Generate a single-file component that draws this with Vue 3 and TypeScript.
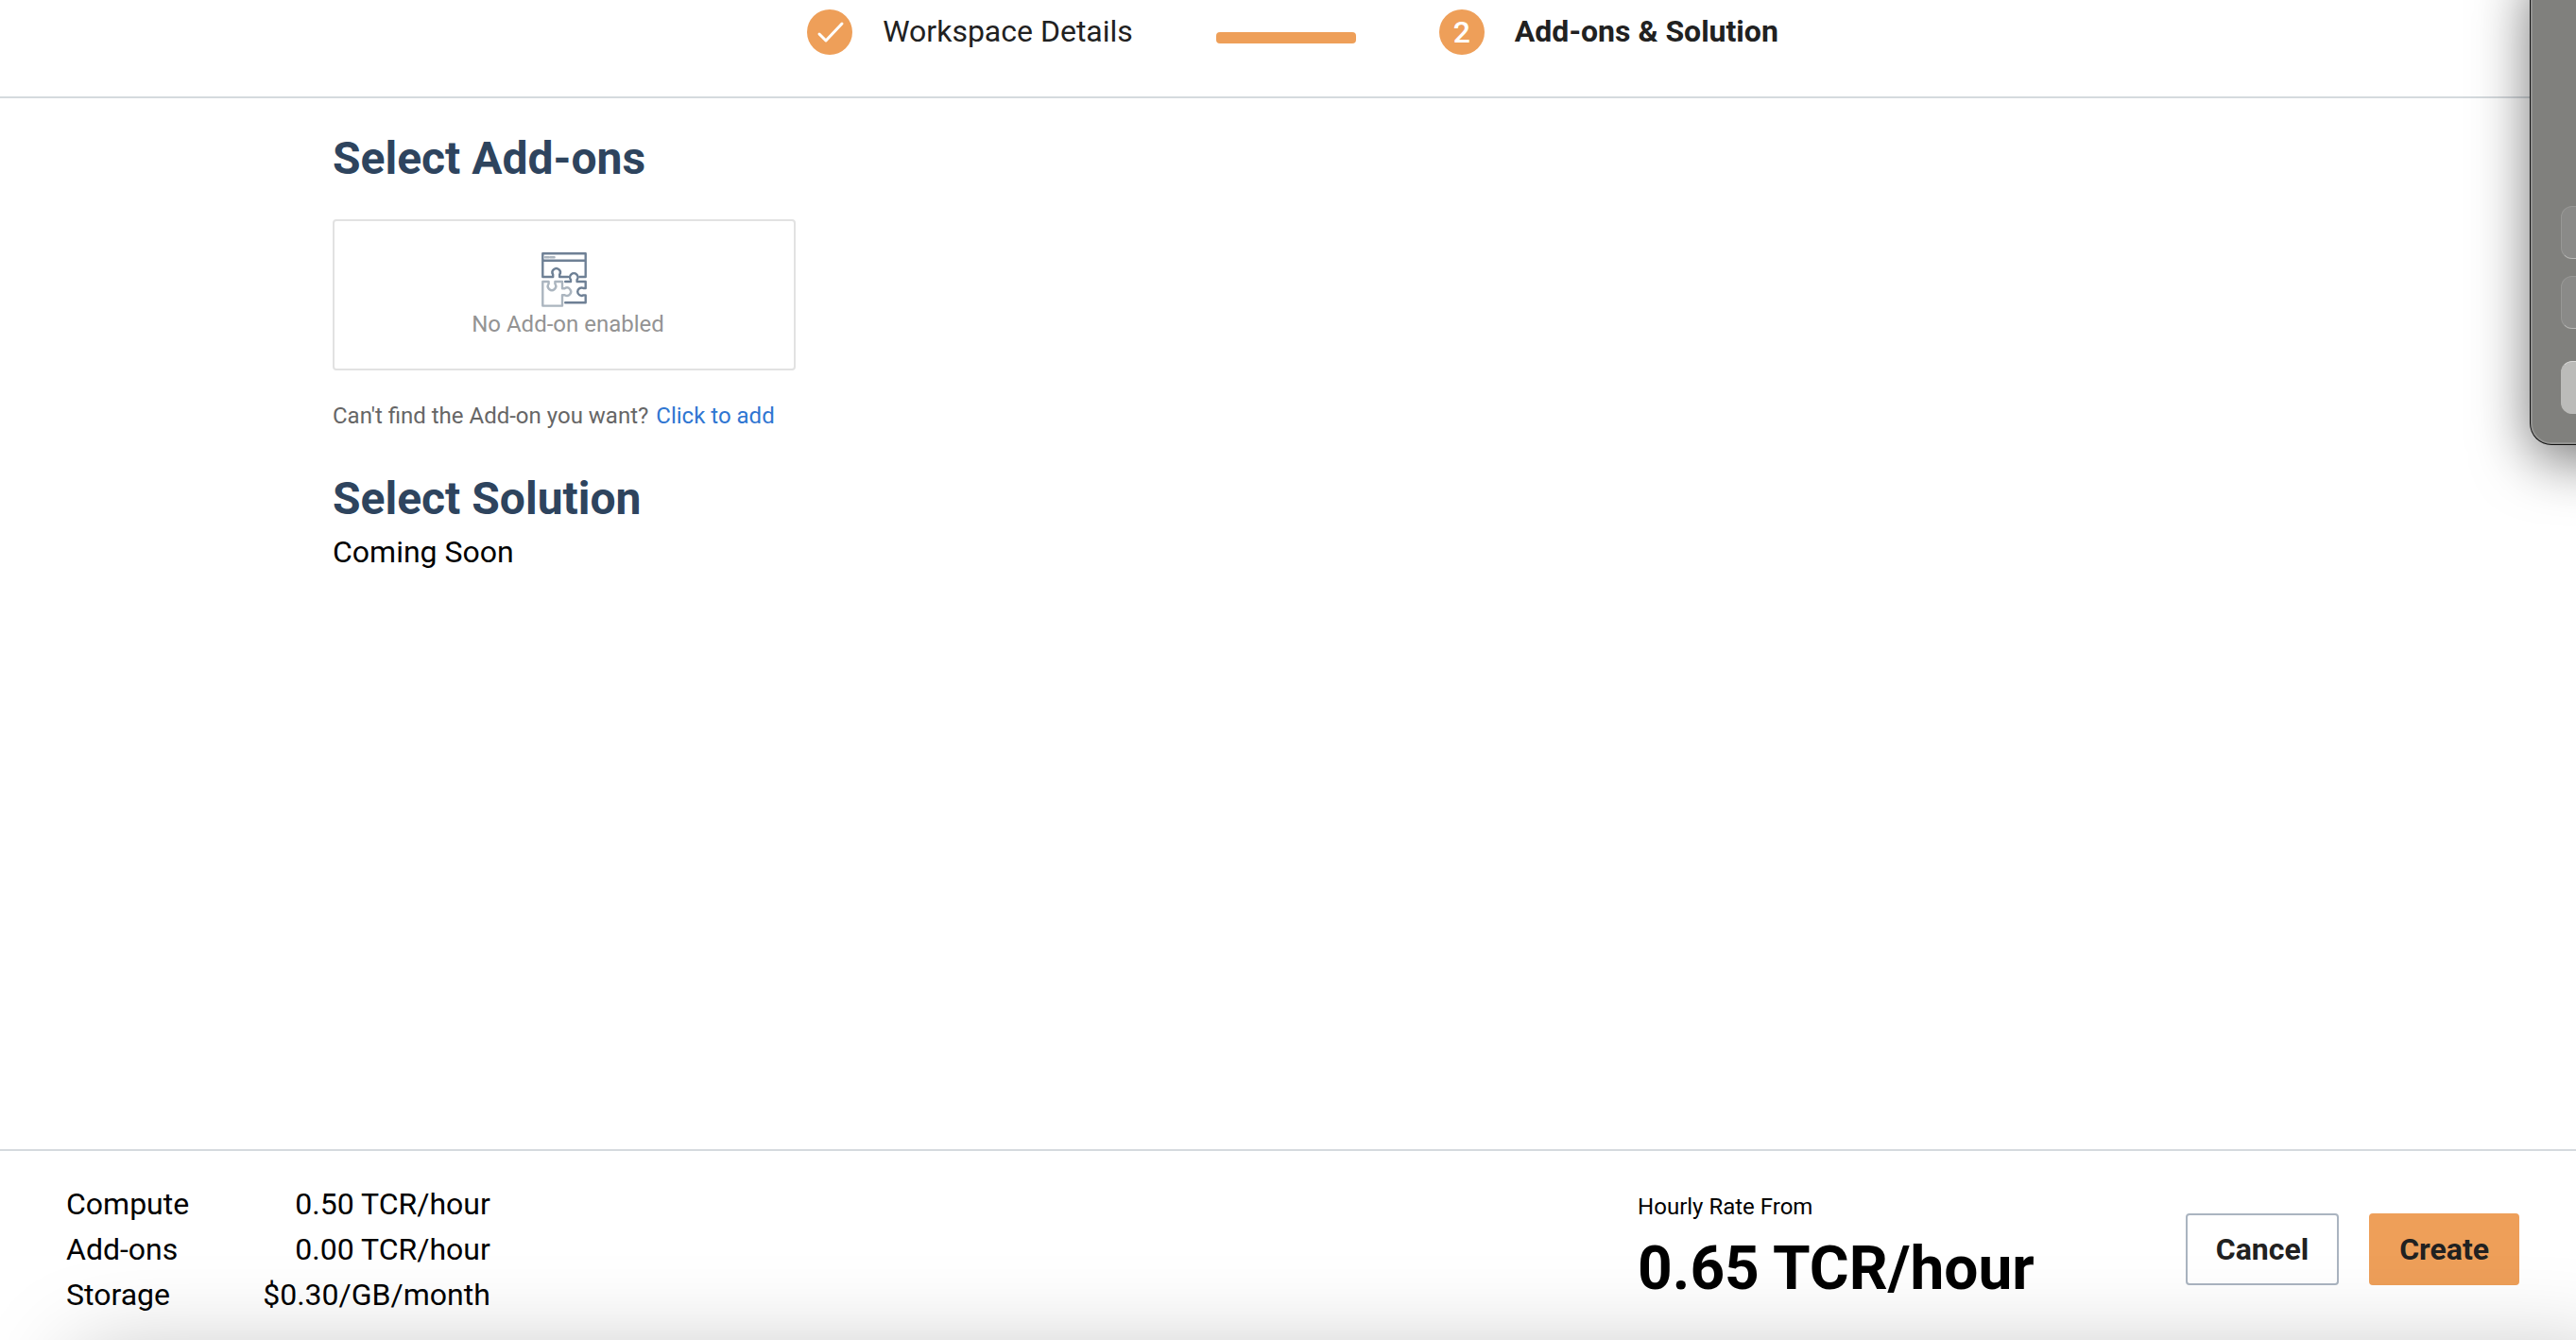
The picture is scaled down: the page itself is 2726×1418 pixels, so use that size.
<script setup lang="ts">
interface RateLine {
  label: string
  amount: string
}

const rates: RateLine[] = [
  { label: 'Compute', amount: '0.50 TCR/hour' },
  { label: 'Add-ons', amount: '0.00 TCR/hour' },
  { label: 'Storage', amount: '$0.30/GB/month' },
]
</script>

<template>
  <div class="page">
    <header class="stepper">
      <div class="step">
        <span class="badge">
          <svg class="check" viewBox="0 0 48 48" aria-hidden="true">
            <path d="M13 26 L20 33 L37 15" />
          </svg>
        </span>
        <span class="step-label">Workspace Details</span>
      </div>
      <span class="connector"></span>
      <div class="step current" aria-current="step">
        <span class="badge">2</span>
        <span class="step-label">Add-ons &amp; Solution</span>
      </div>
    </header>

    <main class="content">
      <h2 class="title">Select Add-ons</h2>
      <div class="empty-card">
        <svg class="puzzle" viewBox="0 0 48 60" aria-hidden="true">
          <g class="dark">
            <path d="M1.3 8.7 H46.7 M28 26 H19.2 V23.6 A4.2 4.2 0 1 0 12.2 23.6 V26 H1.3 V1.3 H46.7 V26 H40.4" />
            <path d="M25.2 31 H31 V29 A4.2 4.2 0 1 1 37.6 29 V31 H46.7 V38 H44.4 A4.2 4.2 0 1 0 44.4 45.4 H46.7 V53.2 H25.2" />
          </g>
          <g class="light">
            <path d="M1.3 31 H7.6 V33.4 A4.2 4.2 0 1 0 14.4 33.4 V31 H22 V38.2 H24.6 A4.2 4.2 0 1 1 24.6 45.2 H22 V56.6 H1.3 Z" />
            <path d="M4 5.2 H7.6 M9.4 5.2 H13.6" />
          </g>
        </svg>
        <span class="empty-text">No Add-on enabled</span>
      </div>
      <p class="hint">Can't find the Add-on you want? <a href="#">Click to add</a></p>
      <h2 class="title">Select Solution</h2>
      <p class="soon">Coming Soon</p>
    </main>

    <footer class="summary">
      <dl class="rates">
        <template v-for="rate in rates" :key="rate.label">
          <dt>{{ rate.label }}</dt>
          <dd>{{ rate.amount }}</dd>
        </template>
      </dl>
      <div class="total">
        <span class="total-label">Hourly Rate From</span>
        <strong class="total-value">0.65 TCR/hour</strong>
      </div>
      <div class="actions">
        <button type="button" class="btn outline">Cancel</button>
        <button type="button" class="btn primary">Create</button>
      </div>
    </footer>

    <aside class="dialog">
      <span class="field"></span>
      <span class="field"></span>
      <span class="field action"></span>
    </aside>
  </div>
</template>

<style>
body {
  background: #fff;
}
</style>

<style scoped>
.page {
  position: relative;
  display: flex;
  flex-direction: column;
  min-height: 100vh;
  overflow: hidden;
  box-sizing: border-box;
  font-family: Roboto, "Liberation Sans", sans-serif;
  font-size: 32px;
  line-height: 48px;
  color: #000;
}

.stepper {
  display: flex;
  justify-content: center;
  align-items: center;
  padding: 10px 0 44px 10px;
  border-bottom: 2px solid #d5dade;
  color: #212121;
}

.step {
  display: flex;
  align-items: center;
  gap: 32px;
}

.step-label {
  line-height: 46px;
  padding-bottom: 2px;
}

.current .step-label {
  font-weight: 700;
}

.badge {
  display: flex;
  align-items: center;
  justify-content: center;
  width: 48px;
  height: 48px;
  border-radius: 50%;
  background: #ee9f59;
  color: #fff;
  font-weight: 500;
  line-height: 46px;
}

.check {
  width: 48px;
  height: 48px;
  fill: none;
  stroke: #fff;
  stroke-width: 3;
  stroke-linecap: round;
  stroke-linejoin: round;
}

.connector {
  width: 148px;
  height: 12px;
  margin: 12px 88px 0;
  border-radius: 4px;
  background: #ee9f59;
}

.content {
  flex: 1;
  padding: 32px 352px;
}

.title {
  margin: 0;
  font-size: 48px;
  font-weight: 700;
  line-height: 64px;
  color: #2e445e;
}

.empty-card {
  display: flex;
  flex-direction: column;
  align-items: center;
  box-sizing: border-box;
  width: 490px;
  height: 160px;
  margin-top: 32px;
  padding-top: 33px;
  border: 2px solid #e2e2e2;
  border-radius: 4px;
}

.puzzle {
  width: 48px;
  height: 60px;
  fill: none;
  stroke-width: 2.4;
  stroke-linecap: round;
  stroke-linejoin: round;
}

.dark {
  stroke: #6e8095;
}

.light {
  stroke: #abb5bf;
}

.empty-text {
  padding-left: 8px;
  font-size: 24px;
  line-height: 32px;
  color: #939393;
}

.hint {
  margin: 32px 0 40px;
  font-size: 24px;
  line-height: 32px;
  color: #666;
}

.hint a {
  margin-left: 2px;
  color: #2f76d2;
  text-decoration: none;
}

.soon {
  margin: 0;
}

.summary {
  position: relative;
  display: flex;
  align-items: center;
  overflow: hidden;
  padding: 32px 60px 24px 70px;
  border-top: 2px solid #d5dade;
}

/* soft shade cast upward from below the bottom edge */
.summary::after {
  content: "";
  position: absolute;
  top: 100%;
  left: 80px;
  right: -40px;
  height: 300px;
  box-shadow: 0 16px 100px rgba(0, 0, 0, 0.25);
  pointer-events: none;
}

.rates {
  display: grid;
  grid-template-columns: auto auto;
  column-gap: 78px;
  margin: 0;
}

.rates dd {
  margin: 0;
  text-align: right;
}

.total {
  display: flex;
  flex-direction: column;
  gap: 10px;
  margin-left: auto;
}

.total-label {
  font-size: 24px;
  line-height: 32px;
}

.total-value {
  font-size: 64px;
  font-weight: 700;
  line-height: 80px;
}

.actions {
  display: flex;
  gap: 32px;
  margin-left: 160px;
}

.btn {
  box-sizing: border-box;
  height: 76px;
  padding: 0 30px;
  border: 2px solid #aab4c0;
  border-radius: 4px;
  background: #fff;
  color: #212121;
  font-family: inherit;
  font-size: 32px;
  font-weight: 700;
}

.primary {
  border-color: #ee9f59;
  background: #ee9f59;
}

/* floating window cut off by the right and top edges */
.dialog {
  position: absolute;
  top: -40px;
  right: -400px;
  display: flex;
  flex-direction: column;
  gap: 18px;
  box-sizing: border-box;
  width: 448px;
  height: 510px;
  padding: 256px 30px 0;
  border: 2px solid #939391;
  border-radius: 22px;
  background: #80807d;
  box-shadow: 0 0 0 1px #111, 0 16px 60px rgba(0, 0, 0, 0.55);
}

.field {
  box-sizing: border-box;
  height: 56px;
  border: 1px solid #989896;
  border-bottom-color: #b8b8b6;
  border-radius: 12px;
  background: #8a8a88;
}

.action {
  margin-top: 16px;
  border-color: #dadad8 #bbbbb9 #bbbbb9;
  background: #bbbbb9;
}
</style>
